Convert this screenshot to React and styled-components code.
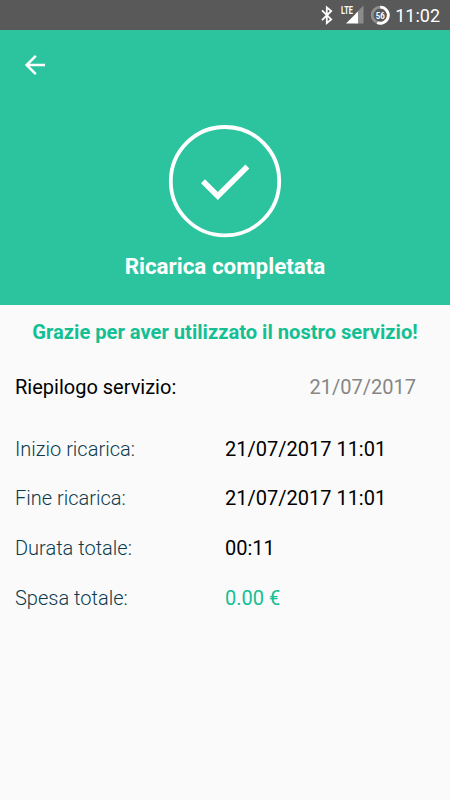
import React from "react";
import styled, { createGlobalStyle } from "styled-components";

const GlobalStyle = createGlobalStyle`
  * {
    box-sizing: border-box;
  }

  body {
    margin: 0;
    background-color: #fafafa;
    font-family: Roboto, "Liberation Sans", sans-serif;
  }
`;

const Screen = styled.div`
  display: flex;
  flex-direction: column;
  width: 450px;
  height: 800px;
  overflow: hidden;
  background-color: #fafafa;
`;

const StatusBar = styled.div`
  display: flex;
  align-items: center;
  justify-content: flex-end;
  height: 30px;
  padding-right: 10px;
  background-color: #595959;
`;

const StatusIcons = styled.svg`
  display: block;
  width: 72px;
  height: 30px;
  margin-right: 3px;
`;

const Clock = styled.span`
  color: #fff;
  font-size: 18px;
  line-height: 30px;
  padding-top: 1px;
`;

const Header = styled.header`
  display: flex;
  flex-direction: column;
  align-items: center;
  height: 275px;
  background-color: #2bc49e;
`;

const Toolbar = styled.div`
  display: flex;
  align-items: center;
  width: 100%;
  height: 70px;
  padding-left: 20px;
`;

const BackButton = styled.button`
  display: flex;
  padding: 0;
  border: 0;
  background: none;
`;

const DoneIcon = styled.svg`
  display: block;
  width: 114px;
  height: 114px;
  margin-top: 24px;
`;

const Title = styled.h1`
  margin: 14px 0 0;
  color: #fff;
  font-size: 22.4px;
  font-weight: 700;
  line-height: 28px;
`;

const Content = styled.main`
  padding: 0 15px;
`;

const Thanks = styled.h2`
  margin: 13px 0 0;
  color: #13bf93;
  font-size: 20.15px;
  font-weight: 700;
  line-height: 28px;
  text-align: center;
  white-space: nowrap;
`;

const Summary = styled.div`
  display: flex;
  justify-content: space-between;
  margin-top: 26px;
  padding-right: 19px;
  color: #000;
  font-size: 20px;
  line-height: 30px;
`;

const SummaryDate = styled.span`
  color: #868686;
`;

const Details = styled.dl`
  display: grid;
  grid-template-columns: 210px 1fr;
  grid-auto-rows: 49.6px;
  align-items: center;
  margin: 22px 0 0;
  font-size: 20px;
`;

const Label = styled.dt`
  color: #0b3a4d;
  font-weight: 300;
`;

const Value = styled.dd`
  margin: 0;
  color: ${(props) => (props.$accent ? "#13bf93" : "#000")};
`;

const rows = [
  { label: "Inizio ricarica:", value: "21/07/2017 11:01" },
  { label: "Fine ricarica:", value: "21/07/2017 11:01" },
  { label: "Durata totale:", value: "00:11" },
  { label: "Spesa totale:", value: "0.00 €", accent: true },
];

// bluetooth, LTE signal and battery ring
function StatusGlyphs() {
  return (
    <StatusIcons viewBox="0 0 72 30">
      <path d="M2 10.3 L11.2 19.4 L6.8 23 V7.4 L11.2 11 L2 20.1" fill="none" stroke="#fff" strokeWidth="1.8" />
      <path d="M35.5 23.5 V13.5 L43.5 5.5 V23.5 Z" fill="#8b8b8b" />
      <path d="M26 23.5 L38 11.6 V23.5 Z" fill="#fff" />
      <text x="21" y="14" fill="#fff" fontSize="11" fontWeight="700" textLength="11.8" lengthAdjust="spacingAndGlyphs">LTE</text>
      <circle cx="60.2" cy="15.2" r="8" fill="none" stroke="#8f8f8f" strokeWidth="2.8" />
      <path d="M60.2 7.2 A8 8 0 1 1 57.3 22.6" fill="none" stroke="#fff" strokeWidth="2.8" />
      <text x="60.2" y="18.5" fill="#fff" fontSize="9" fontWeight="700" textAnchor="middle" textLength="9" lengthAdjust="spacingAndGlyphs">56</text>
    </StatusIcons>
  );
}

export default function App() {
  return (
    <Screen>
      <GlobalStyle />
      <StatusBar>
        <StatusGlyphs />
        <Clock>11:02</Clock>
      </StatusBar>
      <Header>
        <Toolbar>
          <BackButton aria-label="Indietro">
            <svg width="30" height="30" viewBox="0 0 30 30">
              <path d="M25 15 H7 M15.8 5.8 L6.6 15 L15.8 24.2" fill="none" stroke="#fff" strokeWidth="2.5" />
            </svg>
          </BackButton>
        </Toolbar>
        <DoneIcon viewBox="0 0 114 114">
          <circle cx="57" cy="57.2" r="54.2" fill="none" stroke="#fff" strokeWidth="3.8" />
          <path d="M35 57.3 L49.8 72 L79.4 42.6" fill="none" stroke="#fff" strokeWidth="5.6" />
        </DoneIcon>
        <Title>Ricarica completata</Title>
      </Header>
      <Content>
        <Thanks>Grazie per aver utilizzato il nostro servizio!</Thanks>
        <Summary>
          <span>Riepilogo servizio:</span>
          <SummaryDate>21/07/2017</SummaryDate>
        </Summary>
        <Details>
          {rows.map((row) => (
            <React.Fragment key={row.label}>
              <Label>{row.label}</Label>
              <Value $accent={row.accent}>{row.value}</Value>
            </React.Fragment>
          ))}
        </Details>
      </Content>
    </Screen>
  );
}
